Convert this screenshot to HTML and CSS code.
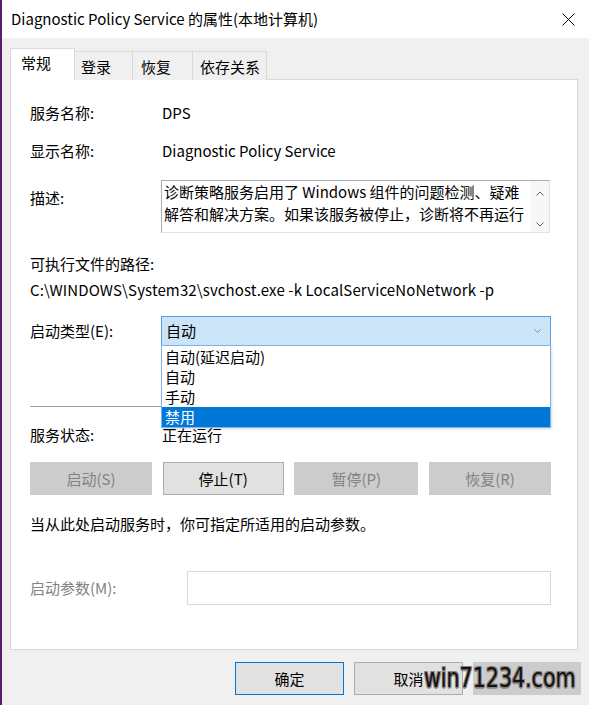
FILE: index.html
```html
<!DOCTYPE html>
<html lang="zh-CN">
<head>
<meta charset="utf-8">
<title>Diagnostic Policy Service 的属性(本地计算机)</title>
<link rel="stylesheet" href="styles.css">
</head>
<body>
<div class="window">
  <div class="titlebar">
    <span class="title">Diagnostic Policy Service 的属性(本地计算机)</span>
    <svg class="close" width="13" height="13" viewBox="0 0 13 13"><path d="M0.5 0.5 L12.5 12.5 M12.5 0.5 L0.5 12.5" stroke="#000" stroke-width="1" fill="none"/></svg>
  </div>
  <div class="client">
    <div class="tabs">
      <div class="tab active">常规</div>
      <div class="tab t2">登录</div>
      <div class="tab t3">恢复</div>
      <div class="tab t4">依存关系</div>
    </div>
    <div class="panel">
      <div class="row r1"><span class="label">服务名称:</span><span>DPS</span></div>
      <div class="row r2"><span class="label">显示名称:</span><span>Diagnostic Policy Service</span></div>
      <div class="row r3">
        <span class="label desc-label">描述:</span>
        <div class="textarea">
          <div class="ta-text">
            <div>诊断策略服务启用了 Windows 组件的问题检测、疑难</div>
            <div>解答和解决方案。如果该服务被停止，诊断将不再运行</div>
          </div>
          <div class="vscroll">
            <svg width="8" height="5" viewBox="0 0 8 5"><path d="M0.5 4.5 L4 1 L7.5 4.5" stroke="#606060" fill="none"/></svg>
            <svg width="8" height="5" viewBox="0 0 8 5"><path d="M0.5 0.5 L4 4 L7.5 0.5" stroke="#606060" fill="none"/></svg>
          </div>
        </div>
      </div>
      <div class="plain r4">可执行文件的路径:</div>
      <div class="plain r5">C:\WINDOWS\System32\svchost.exe -k LocalServiceNoNetwork -p</div>
      <div class="row r6">
        <span class="label">启动类型(E):</span>
        <div class="combo">
          <span>自动</span>
          <svg width="7" height="4" viewBox="0 0 7 4"><path d="M0.5 0.5 L3.5 3.5 L6.5 0.5" stroke="#8a8a8a" fill="none"/></svg>
          <div class="droplist">
            <div class="item">自动(延迟启动)</div>
            <div class="item">自动</div>
            <div class="item">手动</div>
            <div class="item sel">禁用</div>
          </div>
        </div>
      </div>
      <div class="sep"></div>
      <div class="row r7"><span class="label">服务状态:</span><span>正在运行</span></div>
      <div class="btnrow">
        <div class="btn disabled b1">启动(S)</div>
        <div class="btn b2">停止(T)</div>
        <div class="btn disabled b3">暂停(P)</div>
        <div class="btn disabled b4">恢复(R)</div>
      </div>
      <div class="plain hint">当从此处启动服务时，你可指定所适用的启动参数。</div>
      <div class="row r8">
        <span class="label param-label">启动参数(M):</span>
        <div class="input"></div>
      </div>
    </div>
    <div class="footer">
      <div class="btn fbtn default">确定</div>
      <div class="btn fbtn">取消</div>
      <div class="btn fbtn disabled apply"></div>
      <div class="watermark">win71234.com</div>
    </div>
  </div>
</div>
</body>
</html>
```
FILE: styles.css
```css
* { box-sizing: border-box; }
html, body {
  margin: 0;
  padding: 0;
}
body {
  width: 589px;
  height: 705px;
  overflow: hidden;
  background: #f0f0f0;
  font-family: "Noto Sans CJK SC", sans-serif;
  font-size: 15px;
  color: #000;
}
.window {
  height: 705px;
  border-left: 2px solid #5a1e68;
  background: #f0f0f0;
}
.titlebar {
  height: 38px;
  background: #fff;
  display: flex;
  align-items: center;
  justify-content: space-between;
  padding: 0 14px 0 9px;
}
.title {
  font-size: 15px;
  line-height: 20px;
}
.client {
  padding-top: 10px;
}
.tabs {
  display: flex;
  align-items: flex-end;
  height: 32px;
  margin-left: 8px;
  position: relative;
  z-index: 2;
  margin-bottom: -1px;
}
.tab {
  height: 29px;
  border: 1px solid #d9d9d9;
  border-bottom: none;
  background: #f0f0f0;
  line-height: 20px;
  padding-top: 5px;
  padding-left: 6px;
  margin-left: -1px;
  white-space: nowrap;
}
.tab.active {
  height: 32px;
  width: 65px;
  background: #fff;
  margin-left: 0;
  padding-left: 10px;
  padding-top: 4px;
}
.t2 { width: 59px; }
.t3 { width: 61px; padding-left: 8px; }
.t4 { width: 75px; padding-left: 7px; }
.panel {
  margin: 0 11px 0 8px;
  height: 571px;
  background: #fff;
  border: 1px solid #d9d9d9;
  padding: 0 26px 0 19px;
  position: relative;
  z-index: 1;
}
.row {
  display: flex;
  align-items: center;
  line-height: 20px;
}
.label {
  width: 132px;
  flex: none;
}
.plain {
  line-height: 20px;
}
.r1 { margin-top: 23px; }
.r2 { margin-top: 18px; }
.r3 { margin-top: 19px; align-items: flex-start; }
.desc-label { padding-top: 8px; }
.textarea {
  width: 389px;
  height: 53px;
  margin-left: -1px;
  border: 1px solid #abadb3;
  border-right-color: #e3e3e3;
  border-bottom-color: #e3e3e3;
  display: flex;
  justify-content: space-between;
}
.ta-text {
  padding-left: 2px;
  line-height: 22px;
  white-space: nowrap;
}
.vscroll {
  width: 19px;
  background: #f7f7f7;
  display: flex;
  flex-direction: column;
  justify-content: space-between;
  align-items: center;
  padding: 10px 0 5px;
}
.vscroll svg { display: block; }
.r4 { margin-top: 21px; }
.r5 { margin-top: 6px; letter-spacing: 0.12px; }
.r6 { margin-top: 16px; }
.combo {
  position: relative;
  width: 390px;
  height: 30px;
  margin-left: -1px;
  background: #cce4f7;
  border: 1px solid #569de5;
  display: flex;
  align-items: center;
  justify-content: space-between;
  padding: 0 9px 0 4px;
}
.droplist {
  position: absolute;
  left: -1px;
  right: -1px;
  top: 28px;
  background: #fff;
  border: 1px solid #7eb4ea;
  box-shadow: 1px 1px 2px rgba(0,0,0,0.15);
}
.item {
  height: 20px;
  line-height: 20px;
  padding-left: 3px;
}
.item:first-child { margin-top: 1px; }
.item.sel {
  background: #0078d7;
  color: #fff;
}
.sep {
  margin-top: 60px;
  height: 1px;
  background: #a0a0a0;
}
.r7 { margin-top: 18px; }
.btnrow {
  margin-top: 17px;
  display: flex;
  justify-content: space-between;
}
.btn {
  height: 33px;
  background: #e1e1e1;
  border: 1px solid #adadad;
  display: flex;
  align-items: center;
  justify-content: center;
  line-height: 20px;
}
.b1 { width: 122px; }
.b2 { width: 121px; }
.b3 { width: 124px; }
.b4 { width: 122px; }
.btn.disabled {
  background: #cccccc;
  border-color: #cccccc;
  color: #838383;
}
.hint { margin-top: 19px; }
.r8 { margin-top: 37px; }
.param-label {
  color: #838383;
  width: 157px;
}
.input {
  width: 364px;
  height: 34px;
  border: 1px solid #d9d9d9;
  background: #fff;
}
.footer {
  position: relative;
  display: flex;
  justify-content: flex-end;
  gap: 10px;
  margin-top: 12px;
  padding-right: 8px;
}
.fbtn {
  width: 109px;
  height: 33px;
}
.fbtn.apply { width: 108px; }
.fbtn.default {
  border-color: #0078d7;
}
.watermark {
  position: absolute;
  left: 422px;
  top: 1px;
  font-family: "DejaVu Sans Condensed", "Liberation Sans Narrow", sans-serif;
  font-size: 26px;
  line-height: 30px;
  color: #111;
  white-space: nowrap;
  transform: scaleX(0.88);
  transform-origin: left center;
  text-shadow: -1px -1px 0 #8a7f7f, 1px -1px 0 #8a7f7f, -1px 1px 0 #8a7f7f, 1px 1px 0 #8a7f7f, 0 2px 0 #9a9090;
}
```
